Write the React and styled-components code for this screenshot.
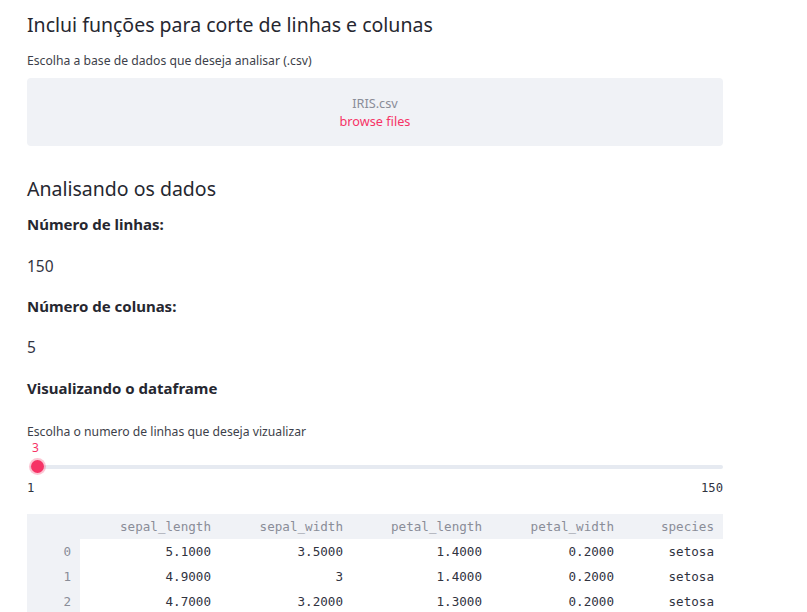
import React from 'react';
import styled, { createGlobalStyle } from 'styled-components';

const GlobalStyle = createGlobalStyle`
  html, body {
    margin: 0;
    padding: 0;
    background: #ffffff;
  }
  body {
    font-family: "Noto Sans", "Open Sans", sans-serif;
    color: #262730;
  }
`;

const Page = styled.div`
  width: 696px;
  padding: 12px 0 0 27px;
`;

const Title = styled.h2`
  margin: 0;
  font-size: 19.5px;
  font-weight: 400;
  line-height: 26px;
  color: #262730;
`;

const Label = styled.div`
  font-size: 12.2px;
  line-height: 16px;
  color: #3d3f4a;
  margin-top: ${(p) => p.top || 0}px;
`;

const DropZone = styled.div`
  margin-top: 9px;
  height: 68px;
  background: #f0f2f6;
  border-radius: 4px;
  display: flex;
  flex-direction: column;
  align-items: center;
  justify-content: center;
  font-size: 12.7px;
  line-height: 18px;
`;

const FileName = styled.span`
  color: #8a8d98;
`;

const Browse = styled.span`
  color: #f63366;
`;

const Heading = styled.h3`
  margin: 30px 0 0;
  font-size: 19.5px;
  font-weight: 400;
  line-height: 26px;
`;

const Bold = styled.div`
  margin-top: ${(p) => p.top}px;
  font-size: 15px;
  font-weight: 700;
  line-height: 22px;
`;

const Value = styled.div`
  margin-top: ${(p) => p.top}px;
  font-size: 15.5px;
  line-height: 22px;
  color: #31333f;
`;

const SliderBox = styled.div`
  margin-top: 1px;
`;

const SliderValue = styled.div`
  margin-left: 5px;
  font-family: "Noto Sans", sans-serif;
  font-size: 12px;
  line-height: 14px;
  color: #f63366;
`;

const Track = styled.div`
  position: relative;
  margin-top: 10px;
  margin-left: 3px;
  height: 4px;
  border-radius: 2px;
  background: #e6eaf1;
`;

const Thumb = styled.div`
  position: absolute;
  left: 1px;
  top: -5px;
  width: 13px;
  height: 13px;
  border-radius: 50%;
  background: #f63366;
  box-shadow: 0 0 0 2px rgba(246, 51, 102, 0.28);
`;

const Range = styled.div`
  display: flex;
  justify-content: space-between;
  margin-top: 11px;
  font-family: "DejaVu Sans Mono", monospace;
  font-size: 12.2px;
  line-height: 16px;
  color: #31333f;
`;

const Table = styled.table`
  margin-top: 18px;
  width: 696px;
  border-collapse: collapse;
  table-layout: fixed;
  font-family: "DejaVu Sans Mono", monospace;
  font-size: 12.6px;
`;

const Cell = styled.td`
  height: 25px;
  padding: 0 9px;
  text-align: right;
  white-space: nowrap;
  font-weight: 400;
  color: ${(p) => (p.head ? '#8a8d98' : '#31333f')};
  background: ${(p) => (p.head ? '#f0f2f6' : '#ffffff')};
`;

const columns = ['sepal_length', 'sepal_width', 'petal_length', 'petal_width', 'species'];
const widths = [53, 140, 132, 139, 132, 100];
const rows = [
  ['5.1000', '3.5000', '1.4000', '0.2000', 'setosa'],
  ['4.9000', '3', '1.4000', '0.2000', 'setosa'],
  ['4.7000', '3.2000', '1.3000', '0.2000', 'setosa'],
];

export default function App() {
  return (
    <Page>
      <GlobalStyle />
      <Title>Inclui funções para corte de linhas e colunas</Title>
      <Label top={15}>Escolha a base de dados que deseja analisar (.csv)</Label>
      <DropZone>
        <FileName>IRIS.csv</FileName>
        <Browse>browse files</Browse>
      </DropZone>

      <Heading>Analisando os dados</Heading>
      <Bold top={11}>Número de linhas:</Bold>
      <Value top={20}>150</Value>
      <Bold top={18}>Número de colunas:</Bold>
      <Value top={19}>5</Value>
      <Bold top={19}>Visualizando o dataframe</Bold>

      <Label top={25}>Escolha o numero de linhas que deseja vizualizar</Label>
      <SliderBox>
        <SliderValue>3</SliderValue>
        <Track>
          <Thumb />
        </Track>
        <Range>
          <span>1</span>
          <span>150</span>
        </Range>
      </SliderBox>

      <Table>
        <colgroup>
          {widths.map((w, i) => (
            <col key={i} style={{ width: w }} />
          ))}
        </colgroup>
        <thead>
          <tr>
            <Cell as="th" head />
            {columns.map((c) => (
              <Cell as="th" head key={c}>
                {c}
              </Cell>
            ))}
          </tr>
        </thead>
        <tbody>
          {rows.map((r, i) => (
            <tr key={i}>
              <Cell head>{i}</Cell>
              {r.map((v, j) => (
                <Cell key={j}>{v}</Cell>
              ))}
            </tr>
          ))}
        </tbody>
      </Table>
    </Page>
  );
}
